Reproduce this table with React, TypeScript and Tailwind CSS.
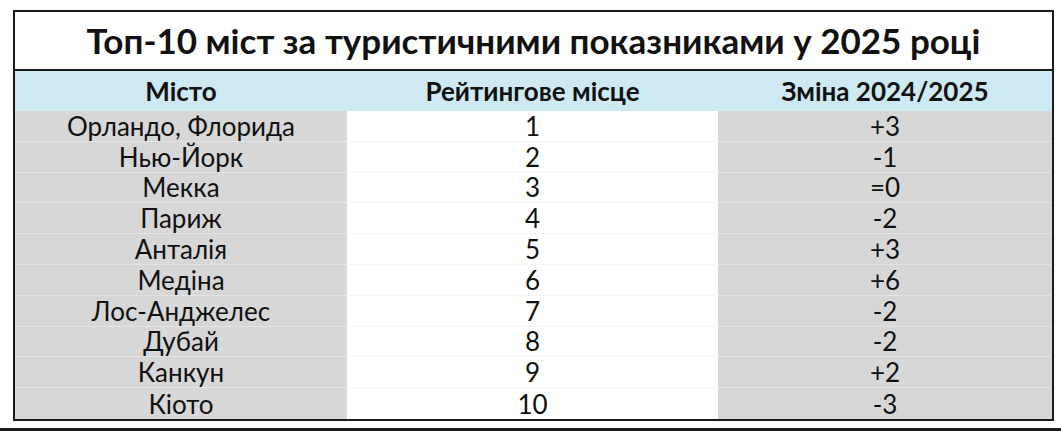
import React from "react";

const rows = [
  ["Орландо, Флорида", "1", "+3"],
  ["Нью-Йорк", "2", "-1"],
  ["Мекка", "3", "=0"],
  ["Париж", "4", "-2"],
  ["Анталія", "5", "+3"],
  ["Медіна", "6", "+6"],
  ["Лос-Анджелес", "7", "-2"],
  ["Дубай", "8", "-2"],
  ["Канкун", "9", "+2"],
  ["Кіото", "10", "-3"],
];

const App = () => {
  return (
    <div className="w-[1061px] h-[431px] bg-white flex flex-col text-[#111]" style={{ fontFamily: 'Lato, "Open Sans", sans-serif' }}>
      <div className="ml-[13px] mt-[10px] w-[1041px] border-2 border-[#1a1a1a] flex flex-col">
        <div className="h-[59px] flex items-center justify-center text-[35px] font-bold border-b-2 border-[#1a1a1a] leading-none">
          Топ-10 міст за туристичними показниками у 2025 році
        </div>
        <div className="grid grid-cols-[332px_371px_334px] h-[40px] bg-[#cfe9f2] text-[26px] font-bold leading-none">
          <div className="flex items-center justify-center">Місто</div>
          <div className="flex items-center justify-center">Рейтингове місце</div>
          <div className="flex items-center justify-center">Зміна 2024/2025</div>
        </div>
        <div className="grid grid-cols-[332px_371px_334px] text-[26px] leading-none">
          {rows.map(([city, rank, change], i) => (
            <React.Fragment key={i}>
              <div className={`h-[30.8px] flex items-center justify-center bg-[#d7d7d7] ${i < 9 ? "border-b border-[#e3e3e3]" : ""}`}>{city}</div>
              <div className={`h-[30.8px] flex items-center justify-center bg-white ${i < 9 ? "border-b border-[#f4f4f4]" : ""}`}>{rank}</div>
              <div className={`h-[30.8px] flex items-center justify-center bg-[#d7d7d7] ${i < 9 ? "border-b border-[#e3e3e3]" : ""}`}>{change}</div>
            </React.Fragment>
          ))}
        </div>
      </div>
      <div className="mt-[7px] h-[3px] bg-[#1a1a1a]" />
    </div>
  );
};

export default App;
